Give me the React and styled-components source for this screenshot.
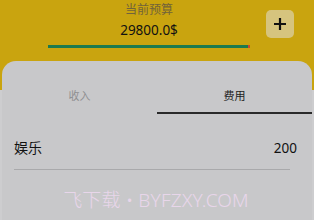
import React, { useState } from "react";
import styled, { createGlobalStyle } from "styled-components";

const Global = createGlobalStyle`
  html, body { margin: 0; padding: 0; }
  body {
    width: 314px;
    height: 220px;
    overflow: hidden;
    background: linear-gradient(#c9a40f 0 90px, #cdcdcf 90px);
    font-family: "Noto Sans", "Noto Sans CJK SC", sans-serif;
  }
`;

const Page = styled.div`
  display: flex;
  flex-direction: column;
  width: 314px;
  height: 220px;
`;

const Header = styled.header`
  display: flex;
  align-items: flex-start;
  height: 61px;
  padding-left: 48px;
  box-sizing: border-box;
`;

const Budget = styled.div`
  width: 202px;
  display: flex;
  flex-direction: column;
  align-items: center;
`;

const Title = styled.div`
  margin-top: 2px;
  font-size: 12px;
  line-height: 16px;
  color: #71633a;
`;

const Amount = styled.div`
  margin-top: 3px;
  font-size: 13.5px;
  line-height: 18px;
  color: #111;
`;

const Bar = styled.div`
  margin-top: 6px;
  width: 100%;
  height: 3px;
  background: #1c7a4e;
  border-right: 2px solid #d2452a;
  box-sizing: border-box;
`;

const AddButton = styled.button`
  margin: 10px 0 0 16px;
  width: 28px;
  height: 28px;
  border: none;
  border-radius: 5px;
  background: #d6c47e;
  display: flex;
  align-items: center;
  justify-content: center;
  padding: 0;
`;

const Panel = styled.section`
  flex: 1;
  margin: 0 2px;
  background: #c8c8ca;
  border-radius: 14px 14px 0 0;
  display: flex;
  flex-direction: column;
`;

const Tabs = styled.div`
  display: flex;
  height: 53px;
`;

const Tab = styled.div`
  flex: 1;
  display: flex;
  align-items: center;
  justify-content: center;
  padding-top: 16px;
  font-size: 11px;
  color: ${(p) => (p.$active ? "#222" : "#8f8f91")};
  border-bottom: 2px solid ${(p) => (p.$active ? "#2a2a2a" : "transparent")};
  box-sizing: border-box;
`;

const Row = styled.div`
  display: flex;
  justify-content: space-between;
  align-items: center;
  margin: 0 22px 0 12px;
  padding: 24px 0 11px;
  border-bottom: 1px solid #a9a9ab;
  font-size: 14px;
  line-height: 20px;
  color: #111;
`;

const Value = styled.span`
  margin-right: -7px;
  font-size: 13.5px;
`;

const Watermark = styled.div`
  margin-top: 18px;
  text-align: center;
  padding-right: 2px;
  font-size: 19px;
  line-height: 24px;
  font-weight: 300;
  color: #e8d6ea;
  letter-spacing: 0.2px;
`;

export default function App() {
  const [tab, setTab] = useState(1);
  return (
    <Page>
      <Global />
      <Header>
        <Budget>
          <Title>当前预算</Title>
          <Amount>29800.0$</Amount>
          <Bar />
        </Budget>
        <AddButton aria-label="add">
          <svg width="14" height="14" viewBox="0 0 14 14">
            <path d="M7 1v12M1 7h12" stroke="#111" strokeWidth="2.2" />
          </svg>
        </AddButton>
      </Header>
      <Panel>
        <Tabs>
          <Tab $active={tab === 0} onClick={() => setTab(0)}>收入</Tab>
          <Tab $active={tab === 1} onClick={() => setTab(1)}>费用</Tab>
        </Tabs>
        <Row>
          <span>娱乐</span>
          <Value>200</Value>
        </Row>
        <Watermark>飞下载 • BYFZXY.COM</Watermark>
      </Panel>
    </Page>
  );
}
